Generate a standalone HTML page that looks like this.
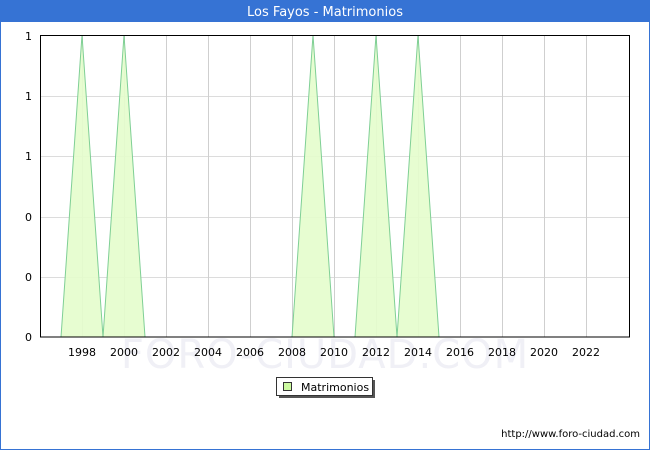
<!DOCTYPE html>
<html><head><style>
html,body{margin:0;padding:0;width:650px;height:450px;overflow:hidden;background:#fff}
</style></head><body>
<svg width="650" height="450" xmlns="http://www.w3.org/2000/svg" font-family="DejaVu Sans, sans-serif">
<rect x="0.5" y="0.5" width="649" height="449" fill="#fff" stroke="#3673d4"/>
<rect x="0" y="0" width="650" height="22" fill="#3673d4"/>
<text x="325" y="16" fill="#fff" font-size="13" text-anchor="middle">Los Fayos - Matrimonios</text>
<text x="325" y="368" fill="#f0f0f6" font-size="40" text-anchor="middle" letter-spacing="1">FORO-CIUDAD.COM</text>
<g stroke="#dcdcdc" stroke-width="1">
<line x1="40" y1="96.5" x2="630" y2="96.5"/>
<line x1="40" y1="156.5" x2="630" y2="156.5"/>
<line x1="40" y1="217.5" x2="630" y2="217.5"/>
<line x1="40" y1="277.5" x2="630" y2="277.5"/>
</g>
<g stroke="#cfcfcf" stroke-width="1">
<line x1="82.5" y1="35" x2="82.5" y2="337"/><line x1="124.5" y1="35" x2="124.5" y2="337"/>
<line x1="166.5" y1="35" x2="166.5" y2="337"/><line x1="208.5" y1="35" x2="208.5" y2="337"/>
<line x1="250.5" y1="35" x2="250.5" y2="337"/><line x1="292.5" y1="35" x2="292.5" y2="337"/>
<line x1="334.5" y1="35" x2="334.5" y2="337"/><line x1="376.5" y1="35" x2="376.5" y2="337"/>
<line x1="418.5" y1="35" x2="418.5" y2="337"/><line x1="460.5" y1="35" x2="460.5" y2="337"/>
<line x1="502.5" y1="35" x2="502.5" y2="337"/><line x1="544.5" y1="35" x2="544.5" y2="337"/>
<line x1="586.5" y1="35" x2="586.5" y2="337"/>
</g>
<g fill="#e4fdcc" fill-opacity="0.9" stroke="#7fcf95" stroke-width="1">
<polygon points="61,337 82,35 103,337"/>
<polygon points="103,337 124,35 145,337"/>
<polygon points="292,337 313,35 334,337"/>
<polygon points="355,337 376,35 397,337"/>
<polygon points="397,337 418,35 439,337"/>
</g>
<rect x="40.5" y="35.5" width="589" height="301.5" fill="none" stroke="#000"/>
<g font-size="11" fill="#000" text-anchor="end">
<text x="32" y="40">1</text><text x="32" y="100">1</text><text x="32" y="160">1</text>
<text x="32" y="221">0</text><text x="32" y="281">0</text><text x="32" y="341">0</text>
</g>
<g font-size="11" fill="#000" text-anchor="middle">
<text x="82" y="356">1998</text><text x="124" y="356">2000</text><text x="166" y="356">2002</text>
<text x="208" y="356">2004</text><text x="250" y="356">2006</text><text x="292" y="356">2008</text>
<text x="334" y="356">2010</text><text x="376" y="356">2012</text><text x="418" y="356">2014</text>
<text x="460" y="356">2016</text><text x="502" y="356">2018</text><text x="544" y="356">2020</text>
<text x="586" y="356">2022</text>
</g>
<rect x="279" y="380" width="96" height="18" fill="#555"/>
<rect x="276.5" y="377.5" width="96" height="18" fill="#fff" stroke="#333"/>
<rect x="283.5" y="382.5" width="8" height="8" fill="#ccfaa0" stroke="#333"/>
<text x="301" y="391" font-size="11">Matrimonios</text>
<text x="640" y="437" font-size="10" text-anchor="end">http://www.foro-ciudad.com</text>
</svg>
</body></html>
